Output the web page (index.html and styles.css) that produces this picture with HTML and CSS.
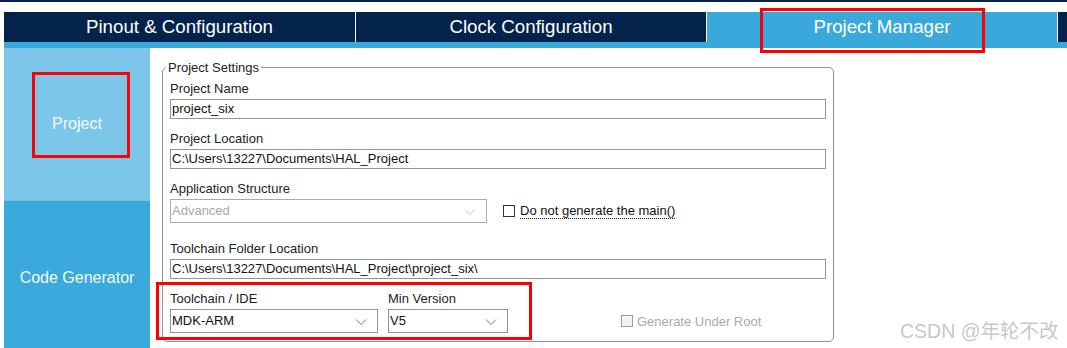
FILE: index.html
```html
<!doctype html>
<html lang="zh-CN">
<head>
	<meta charset="UTF-8">
	<title>Project Manager</title>
	<link rel="stylesheet" href="styles.css">
</head>
<body>
	<div class="topline"></div>
	<div class="tabs">
		<div class="tab">Pinout &amp; Configuration</div>
		<div class="tab">Clock Configuration</div>
		<div class="tab active">Project Manager</div>
		<div class="tab rest"></div>
	</div>
	<div class="main">
		<div class="side">
			<div class="side-item current">Project</div>
			<div class="side-item">Code Generator</div>
		</div>
		<div class="content">
			<fieldset class="settings">
				<legend>Project Settings</legend>
				<div class="field">
					<label>Project Name</label>
					<div class="input">project_six</div>
				</div>
				<div class="field">
					<label>Project Location</label>
					<div class="input">C:\Users\13227\Documents\HAL_Project</div>
				</div>
				<div class="field app">
					<label>Application Structure</label>
					<div class="row">
						<div class="select disabled w-app">Advanced
							<svg class="chev" width="12" height="8" viewBox="0 0 12 8"><polyline points="1,1.5 6,6.5 11,1.5" fill="none" stroke="#c8c8c8" stroke-width="1"/></svg>
						</div>
						<span class="check"><i class="box"></i><span class="dotted">Do not generate the main()</span></span>
					</div>
				</div>
				<div class="field">
					<label>Toolchain Folder Location</label>
					<div class="input">C:\Users\13227\Documents\HAL_Project\project_six\</div>
				</div>
				<div class="row bottom">
					<div class="col">
						<label>Toolchain / IDE</label>
						<div class="select w-ide">MDK-ARM
							<svg class="chev" width="12" height="8" viewBox="0 0 12 8"><polyline points="1,1.5 6,6.5 11,1.5" fill="none" stroke="#777" stroke-width="1"/></svg>
						</div>
					</div>
					<div class="col">
						<label>Min Version</label>
						<div class="select w-ver">V5
							<svg class="chev" width="12" height="8" viewBox="0 0 12 8"><polyline points="1,1.5 6,6.5 11,1.5" fill="none" stroke="#777" stroke-width="1"/></svg>
						</div>
					</div>
					<span class="check off"><i class="box"></i>Generate Under Root</span>
				</div>
			</fieldset>
		</div>
	</div>

	<!-- 标注框 -->
	<div class="mark mark-tab"></div>
	<div class="mark mark-side"></div>
	<div class="mark mark-tool"></div>
	<div class="watermark">CSDN @年轮不改</div>
</body>
</html>
```

FILE: styles.css
```css
html, body { margin:0; padding:0; }
body { width:1067px; height:348px; overflow:hidden; background:#fff; position:relative; font-family:"Liberation Sans", Arial, "Noto Sans CJK SC", sans-serif; font-size:13px; color:#222; }
.topline { height:2px; background:#03234b; margin-bottom:10px; }
.tabs { display:flex; margin-left:4px; height:30px; background:#03234b; border-bottom:6px solid #39a9db; }
.tab { color:#fff; font-size:18.7px; line-height:30px; text-align:center; border-right:1px solid #fff; width:350px; flex:none; }
.tab:first-child { width:351px; }
.tab.active { background:#39a9db; }
.tab.rest { flex:1; border-right:0; }
.main { display:flex; height:300px; }
.side { width:146px; margin-left:4px; flex:none; }
.side-item { display:flex; align-items:center; justify-content:center; color:#f4faff; font-size:16px; height:154px; background:#3aa9dc; border-top:1px solid #74c2e6; }
.side-item.current { height:152px; background:#7cc6ea; border-top:0; }
.content { padding:12px 0 0 12px; }
.settings { margin:0; padding:6px 7px 8px 7px; width:656px; border:1px solid #8e9397; border-radius:5px; }
.settings legend { margin-left:-4px; padding:0 2px; line-height:15px; font-size:13px; color:#222; }
.settings label { display:block; line-height:16px; margin-bottom:2px; color:#222; }
.field { margin-bottom:12px; }
.field.app { margin-bottom:18px; }
.input { height:20px; box-sizing:border-box; border:1px solid #8f979b; padding-left:1px; line-height:18px; color:#111; white-space:nowrap; }
.select { height:24px; box-sizing:border-box; border:1px solid #8f979b; padding-left:1px; line-height:22px; color:#111; position:relative; }
.select.disabled { border-color:#a9acae; color:#a8a8a8; }
.chev { position:absolute; right:10px; top:8px; }
.w-app { width:317px; }
.w-ide { width:208px; }
.w-ver { width:120px; }
.row { display:flex; align-items:center; }
.row.bottom { align-items:flex-end; }
.col { margin-right:10px; }
.col:nth-child(2) { margin-right:0; }
.check { display:flex; align-items:center; margin-left:16px; color:#111; }
.check .box { display:inline-block; width:12px; height:12px; box-sizing:border-box; border:1px solid #333; margin-right:5px; }
.dotted { border-bottom:1px dotted #222; line-height:15px; }
.check.off { margin-left:113px; color:#a9a9a9; height:24px; }
.check.off .box { border-color:#9c9c9c; background:#f1f2f4; margin-right:4px; }
.mark { position:absolute; border:3px solid #f00; box-sizing:border-box; }
.mark-tab { left:760px; top:8px; width:225px; height:45px; }
.mark-side { left:32px; top:72px; width:98px; height:86px; }
.mark-tool { left:156px; top:282px; width:376px; height:58px; }
.watermark { position:absolute; left:900px; top:315px; font-size:19.5px; color:#c8c8c8; font-family:"Liberation Sans", "Noto Sans CJK SC", sans-serif; white-space:nowrap; }
```
